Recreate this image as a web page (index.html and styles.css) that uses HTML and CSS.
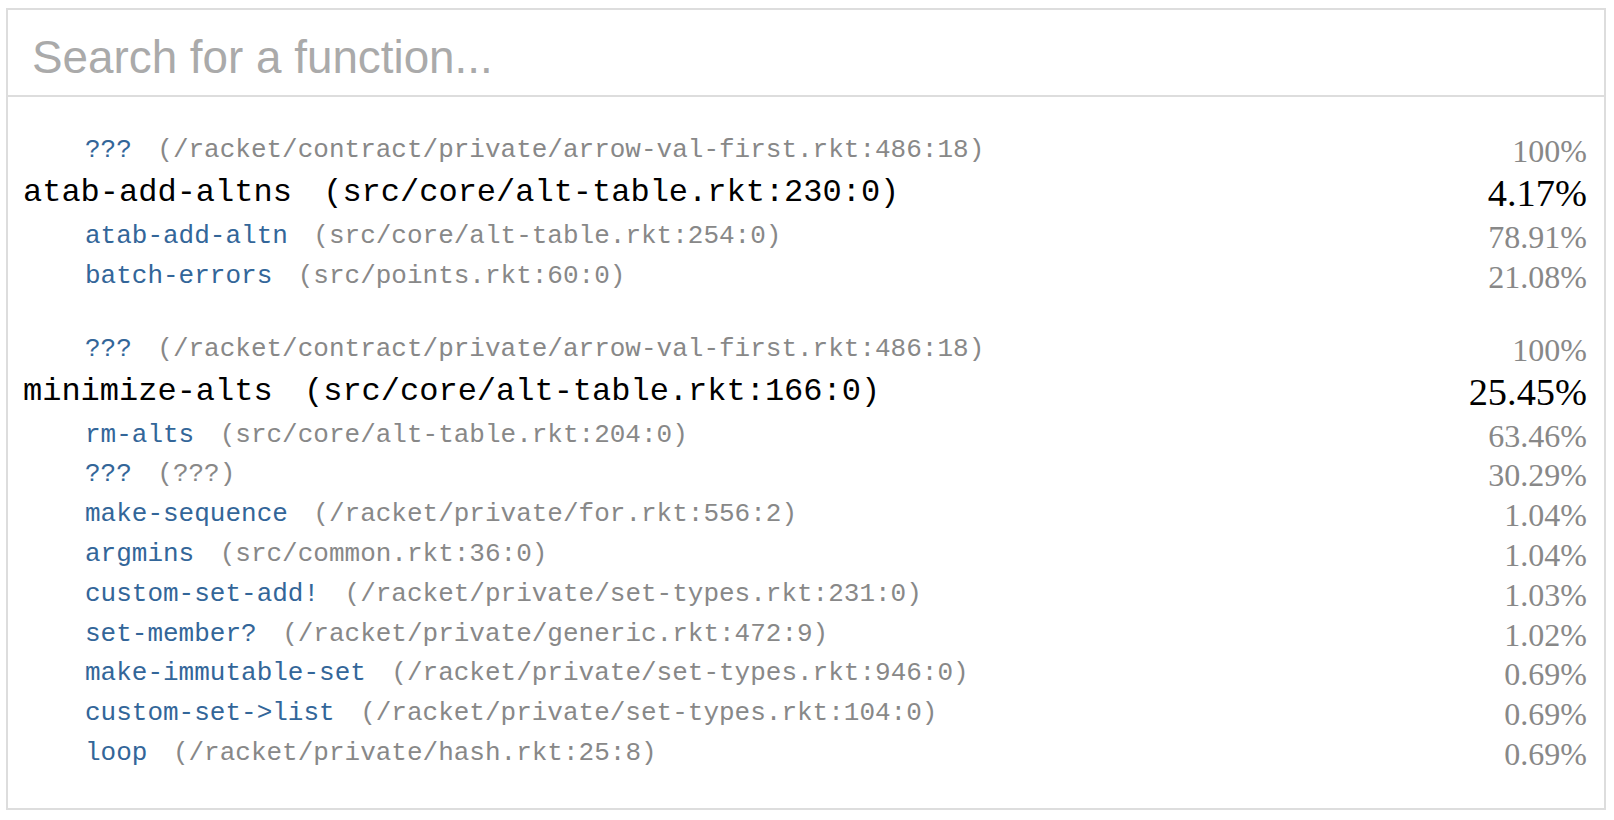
FILE: index.html
```html
<!DOCTYPE html>
<html>
<head>
<meta charset="utf-8">
<link rel="stylesheet" href="styles.css">
</head>
<body>
<div class="panel">
  <div class="search"><input class="search-input" type="text" placeholder="Search for a function..."></div>
  <div class="list">
    <div class="group">
      <div class="row caller"><span class="fn"><span class="name">???</span> <span class="path">(/racket/contract/private/arrow-val-first.rkt:486:18)</span></span><span class="pct">100%</span></div>
      <div class="row node"><span class="fn"><span class="name">atab-add-altns</span> <span class="path">(src/core/alt-table.rkt:230:0)</span></span><span class="pct">4.17%</span></div>
      <div class="row callee"><span class="fn"><span class="name">atab-add-altn</span> <span class="path">(src/core/alt-table.rkt:254:0)</span></span><span class="pct">78.91%</span></div>
      <div class="row callee"><span class="fn"><span class="name">batch-errors</span> <span class="path">(src/points.rkt:60:0)</span></span><span class="pct">21.08%</span></div>
    </div>
    <div class="group">
      <div class="row caller"><span class="fn"><span class="name">???</span> <span class="path">(/racket/contract/private/arrow-val-first.rkt:486:18)</span></span><span class="pct">100%</span></div>
      <div class="row node"><span class="fn"><span class="name">minimize-alts</span> <span class="path">(src/core/alt-table.rkt:166:0)</span></span><span class="pct">25.45%</span></div>
      <div class="row callee"><span class="fn"><span class="name">rm-alts</span> <span class="path">(src/core/alt-table.rkt:204:0)</span></span><span class="pct">63.46%</span></div>
      <div class="row callee"><span class="fn"><span class="name">???</span> <span class="path">(???)</span></span><span class="pct">30.29%</span></div>
      <div class="row callee"><span class="fn"><span class="name">make-sequence</span> <span class="path">(/racket/private/for.rkt:556:2)</span></span><span class="pct">1.04%</span></div>
      <div class="row callee"><span class="fn"><span class="name">argmins</span> <span class="path">(src/common.rkt:36:0)</span></span><span class="pct">1.04%</span></div>
      <div class="row callee"><span class="fn"><span class="name">custom-set-add!</span> <span class="path">(/racket/private/set-types.rkt:231:0)</span></span><span class="pct">1.03%</span></div>
      <div class="row callee"><span class="fn"><span class="name">set-member?</span> <span class="path">(/racket/private/generic.rkt:472:9)</span></span><span class="pct">1.02%</span></div>
      <div class="row callee"><span class="fn"><span class="name">make-immutable-set</span> <span class="path">(/racket/private/set-types.rkt:946:0)</span></span><span class="pct">0.69%</span></div>
      <div class="row callee"><span class="fn"><span class="name">custom-set-&gt;list</span> <span class="path">(/racket/private/set-types.rkt:104:0)</span></span><span class="pct">0.69%</span></div>
      <div class="row callee"><span class="fn"><span class="name">loop</span> <span class="path">(/racket/private/hash.rkt:25:8)</span></span><span class="pct">0.69%</span></div>
    </div>
  </div>
</div>
</body>
</html>
```
FILE: styles.css
```css
html, body {
  margin: 0;
  padding: 0;
  background: #fff;
}

body {
  padding: 8px 0 0 6px;
}

.panel {
  box-sizing: border-box;
  width: 1600px;
  height: 802px;
  border: 2px solid #ddd;
  display: flex;
  flex-direction: column;
}

.search {
  border-bottom: 2px solid #ddd;
  height: 85px;
  display: flex;
  align-items: center;
}

.search-input {
  box-sizing: border-box;
  width: 100%;
  height: 85px;
  border: none;
  outline: none;
  padding: 10px 0 0 24px;
  margin: 0;
  background: transparent;
  font-family: "Liberation Sans", Arial, sans-serif;
  font-size: 45.8px;
  color: #333;
}

.search-input::placeholder {
  color: #aaa;
  opacity: 1;
}

.list {
  padding: 33px 17px 0 15px;
  display: flex;
  flex-direction: column;
  gap: 33px;
}

.row {
  display: flex;
  justify-content: space-between;
  align-items: flex-start;
  white-space: pre;
}

.fn {
  font-family: "Liberation Mono", "Courier New", monospace;
}

.path {
  margin-left: 0.38em;
}

.caller {
  height: 40px;
}

.callee {
  height: 39.8px;
}

.caller .fn, .callee .fn {
  font-size: 26px;
  line-height: 40px;
  padding-left: 62px;
}

.caller .name, .callee .name {
  color: #336699;
}

.caller .path, .callee .path {
  color: #888;
}

.caller .pct, .callee .pct {
  font-family: "Liberation Serif", "Times New Roman", serif;
  font-size: 32px;
  line-height: 32px;
  padding-top: 5px;
  color: #888;
}

.node {
  height: 46px;
}

.node .fn {
  font-size: 32px;
  line-height: 46px;
  color: #000;
}

.node .pct {
  font-family: "Liberation Serif", "Times New Roman", serif;
  font-size: 38.4px;
  line-height: 38px;
  padding-top: 4px;
  color: #000;
}
```
